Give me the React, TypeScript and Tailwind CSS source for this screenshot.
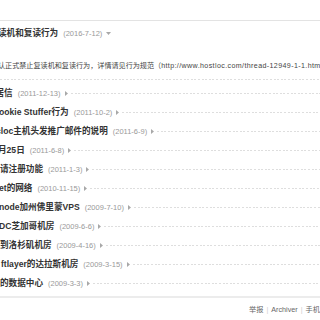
import React from "react";

const rows = [
  { title: "居信", date: "2011-12-13", shift: "-ml-[4.5px]" },
  { title: "ookie Stuffer行为", date: "2011-10-2", shift: "-ml-[1px]" },
  { title: "cloc主机头发推广邮件的说明", date: "2011-6-9", shift: "-ml-[4px]" },
  { title: "月25日", date: "2011-6-8", shift: "-ml-[2px]" },
  { title: "请注册功能", date: "2011-1-3", shift: "ml-0" },
  { title: "et的网络", date: "2010-11-15", shift: "-ml-[1px]" },
  { title: "node加州佛里蒙VPS", date: "2009-7-10", shift: "-ml-[1px]" },
  { title: "DC芝加哥机房", date: "2009-6-6", shift: "-ml-[1px]" },
  { title: "到洛杉矶机房", date: "2009-4-16", shift: "ml-0" },
  { title: "ftlayer的达拉斯机房", date: "2009-3-15", shift: "ml-[1px]" },
  { title: "的数据中心", date: "2009-3-3", shift: "ml-0" },
];

function ArrowRight() {
  return (
    <svg width="3" height="5" viewBox="0 0 3 5" className="ml-[4px] shrink-0">
      <polygon points="0,0 3,2.5 0,5" fill="#a8a8a8" />
    </svg>
  );
}

function ArrowDown() {
  return (
    <svg width="5" height="3" viewBox="0 0 5 3" className="ml-[4px] shrink-0">
      <polygon points="0,0 5,0 2.5,3" fill="#a8a8a8" />
    </svg>
  );
}

function Dots({ className = "" }: { className?: string }) {
  return (
    <div
      className={
        "h-px bg-[image:repeating-linear-gradient(to_right,#dedede_0px,#dedede_2px,transparent_2px,transparent_3.6px)] " +
        className
      }
    />
  );
}

export default function App() {
  return (
    <div className="relative h-[320px] w-[320px] overflow-hidden bg-white font-['Liberation_Sans','Noto_Sans_CJK_SC',sans-serif] whitespace-nowrap">
      <div className="h-[20px]" />
      <div className="border-t border-[#e3e3e3]" />

      {/* expanded announcement */}
      <div className="flex h-[25px] items-center">
        <span className="-ml-[2px] shrink-0 text-[8.6px] font-bold leading-none text-[#333]">读机和复读行为</span>
        <span className="ml-[5px] shrink-0 text-[7.5px] leading-none text-[#999]">(2016-7-12)</span>
        <ArrowDown />
      </div>
      <div className="h-[10px]" />
      <div className="flex h-[21px] items-center">
        <span className="-ml-[2px] text-[7.1px] leading-none text-[#444]">
          认正式禁止复读机和复读行为，详情请见行为规范（
          <span className="tracking-[0.38px]">http://www.hostloc.com/thread-12949-1-1.html</span>）
        </span>
      </div>
      <div className="h-[2px]" />
      <Dots />
      <div className="h-[4px]" />

      {/* older announcements */}
      {rows.map((r, i) => (
        <div key={i} className="flex h-[19px] items-center">
          <span className={"shrink-0 text-[8.6px] font-bold leading-none text-[#333] " + r.shift}>{r.title}</span>
          <span className="ml-[5px] shrink-0 text-[7.5px] leading-none text-[#999]">({r.date})</span>
          <ArrowRight />
          <Dots className="ml-[3px] flex-1" />
        </div>
      ))}

      <div className="h-[3px]" />
      <div className="border-t-2 border-[#ececec]" />
      <div className="flex h-[24px] items-center pl-[249px] text-[7.2px] leading-none text-[#666]">
        <span>举报</span>
        <span className="mx-[3px] text-[#ccc]">|</span>
        <span>Archiver</span>
        <span className="mx-[3px] text-[#ccc]">|</span>
        <span>手机版</span>
        <span className="mx-[3px] text-[#ccc]">|</span>
        <span>小黑屋</span>
      </div>
    </div>
  );
}
